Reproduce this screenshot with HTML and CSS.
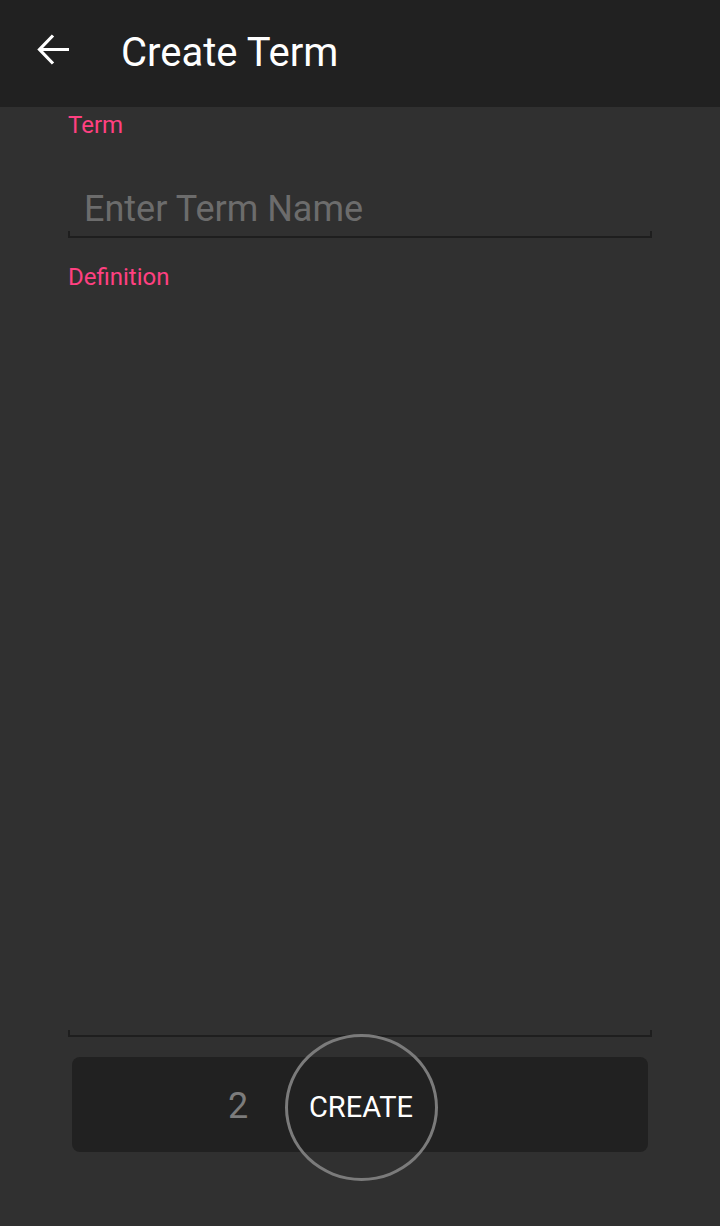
FILE: index.html
```html
<!DOCTYPE html>
<html lang="en">
<head>
<meta charset="utf-8">
<title>Create Term</title>
<link rel="stylesheet" href="styles.css">
</head>
<body>
<div class="screen">
  <header class="appbar">
    <button class="back" aria-label="Back">
      <svg width="36" height="36" viewBox="0 0 36 36">
        <path d="M33 15.5H4M17 1.5L3.5 15.5L17 29.5" fill="none" stroke="#ffffff" stroke-width="3.2" stroke-linecap="butt" stroke-linejoin="miter"/>
      </svg>
    </button>
    <h1 class="title">Create Term</h1>
  </header>
  <main class="form">
    <label class="label label-term">Term</label>
    <div class="field field-term">
      <span class="placeholder">Enter Term Name</span>
    </div>
    <label class="label label-def">Definition</label>
    <div class="field field-def"></div>
    <div class="actions">
      <span class="count">2</span>
      <button class="create">CREATE</button>
    </div>
  </main>
</div>
</body>
</html>
```
FILE: styles.css
```css
* { box-sizing: border-box; }
html, body { margin: 0; padding: 0; }
body {
  background: #303030;
  font-family: Roboto, "Noto Sans", "Liberation Sans", sans-serif;
  width: 720px;
  height: 1226px;
  overflow: hidden;
}
.screen { display: flex; flex-direction: column; height: 1226px; }
.appbar {
  height: 107px;
  background: #212121;
  display: flex;
  align-items: center;
  flex-shrink: 0;
}
.back {
  background: none;
  border: 0;
  padding: 0;
  margin: 0 0 4px 36px;
  width: 36px;
  height: 36px;
  display: flex;
}
.title {
  margin: 0 0 2px 49px;
  color: #ffffff;
  font-weight: 400;
  font-size: 40px;
}
.form {
  flex: 1;
  display: flex;
  flex-direction: column;
  padding: 0 68px;
}
.label {
  color: #ff4081;
  font-size: 24px;
  line-height: 28px;
}
.label-term { margin-top: 4px; }
.field {
  position: relative;
  border-bottom: 2px solid #1e1e1e;
}
.field::before, .field::after {
  content: "";
  position: absolute;
  bottom: -2px;
  width: 2px;
  height: 7px;
  background: #1e1e1e;
}
.field::before { left: 0; }
.field::after { right: 0; }
.field-term {
  height: 99px;
  display: flex;
  align-items: flex-end;
  padding: 0 0 6px 16px;
}
.placeholder {
  color: #6c6c6c;
  font-size: 36px;
  line-height: 42px;
}
.label-def { margin-top: 25px; }
.field-def { height: 746px; }
.actions {
  margin: 20px 4px 0 4px;
  height: 95px;
  background: #212121;
  border-radius: 8px;
  display: flex;
  align-items: center;
  justify-content: center;
  position: relative;
}
.count {
  position: absolute;
  left: 156px;
  top: 29px;
  color: #7c7c7c;
  font-size: 36px;
  line-height: 40px;
}
.create {
  width: 153px;
  height: 147px;
  border-radius: 50%;
  border: 3px solid #7b7b7b;
  background: transparent;
  color: #ffffff;
  font-family: Roboto, "Noto Sans", "Liberation Sans", sans-serif;
  font-size: 29px;
  padding: 0 0 2px 0;
  margin: 6px 0 0 2px;
}
```
